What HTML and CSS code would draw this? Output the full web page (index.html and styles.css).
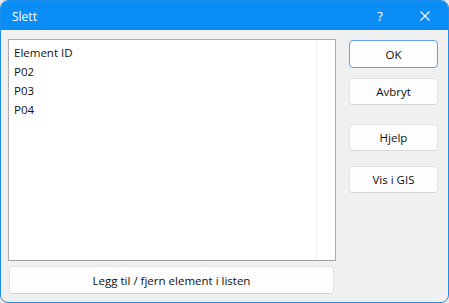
FILE: index.html
```html
<!DOCTYPE html>
<html>
<head>
<meta charset="utf-8">
<link rel="stylesheet" href="styles.css">
</head>
<body>
<div class="window">
  <div class="titlebar">
    <span class="title">Slett</span>
    <span class="help">?</span>
    <span class="close">
      <svg width="10" height="10" viewBox="0 0 10 10"><path d="M0.5 0.5 L9.5 9.5 M9.5 0.5 L0.5 9.5" stroke="#fff" stroke-width="1.1" fill="none"/></svg>
    </span>
  </div>
  <div class="content">
    <div class="left">
      <div class="listbox">
        <div class="items">
          <div class="item">Element ID</div>
          <div class="item">P02</div>
          <div class="item">P03</div>
          <div class="item">P04</div>
        </div>
        <div class="scrollcol"></div>
      </div>
      <button class="btn wide">Legg til / fjern element i listen</button>
    </div>
    <div class="right">
      <button class="btn default ok">OK</button>
      <button class="btn cancel">Avbryt</button>
      <button class="btn help-btn">Hjelp</button>
      <button class="btn gis">Vis i GIS</button>
    </div>
  </div>
</div>
</body>
</html>
```

FILE: styles.css
```css
html, body {
  margin: 0;
  padding: 0;
  background: #e9e9e9;
}
body {
  width: 449px;
  height: 303px;
  font-family: "Open Sans", "Noto Sans", sans-serif;
  font-size: 11.5px;
  color: #111;
}
.window {
  box-sizing: border-box;
  width: 449px;
  height: 303px;
  border: 1px solid #1b8ef0;
  border-radius: 8px;
  background: #f0f0f0;
  overflow: hidden;
  display: flex;
  flex-direction: column;
}
.titlebar {
  height: 29px;
  background: #0b8df6;
  color: #fff;
  display: flex;
  align-items: center;
  padding-left: 11px;
  flex: none;
}
.title {
  flex: 1;
  font-size: 12px;
  margin-top: 1px;
}
.help {
  width: 16px;
  text-align: center;
  font-size: 13px;
  margin-right: 32px;
}
.close {
  width: 10px;
  height: 10px;
  margin-right: 18px;
  display: flex;
}
.content {
  flex: 1;
  display: flex;
  padding: 9px 10px 8px 7px;
  gap: 13px;
}
.left {
  width: 328px;
  display: flex;
  flex-direction: column;
  gap: 5px;
}
.listbox {
  box-sizing: border-box;
  height: 222px;
  background: #fff;
  border: 1px solid #ababab;
  border-bottom-color: #a0a0a0;
  display: flex;
}
.items {
  flex: 1;
  padding: 3px 0 0 5px;
}
.item {
  height: 19px;
  line-height: 19px;
}
.scrollcol {
  width: 18px;
  border-left: 1px solid #edf2f9;
}
.btn {
  box-sizing: border-box;
  font-family: inherit;
  font-size: 11.5px;
  color: #111;
  background: #fdfdfd;
  border: 1px solid #e2e2e2;
  border-bottom-color: #d6d6d6;
  border-radius: 4px;
  padding: 0;
  height: 27px;
}
.wide {
  margin: 0 2px 0 1px;
  height: 28px;
}
.right {
  display: flex;
  flex-direction: column;
  width: 89px;
  padding-top: 1px;
}
.default {
  border: 1px solid #5ea3e6;
  height: 28px;
}
.cancel {
  margin-top: 10px;
}
.help-btn {
  margin-top: 19px;
}
.gis {
  margin-top: 15px;
}
```
